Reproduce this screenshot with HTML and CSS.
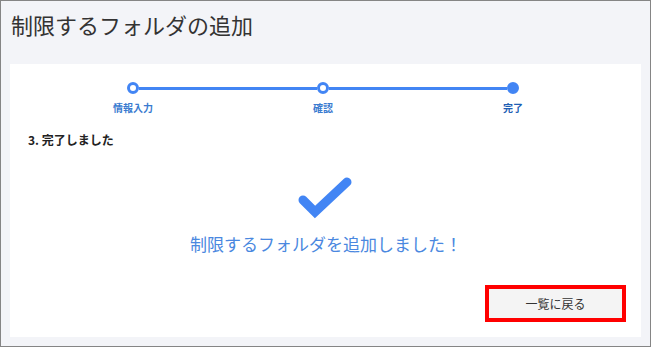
FILE: index.html
```html
<!DOCTYPE html>
<html lang="ja">
<head>
    <meta charset="UTF-8">
    <title>制限するフォルダの追加</title>
    <meta name="viewport" content="width=device-width, initial-scale=1.0">
    <link rel="stylesheet" href="styles.css">
</head>
<body>
    <div class="window">
        <div class="header">
            <h1>制限するフォルダの追加</h1>
        </div>

        <div class="panel">
            <div class="stepper">
                <div class="step first done">
                    <div class="dot-row">
                        <span class="line"></span>
                        <span class="dot"></span>
                        <span class="line"></span>
                    </div>
                    <div class="label">情報入力</div>
                </div>
                <div class="step done">
                    <div class="dot-row">
                        <span class="line"></span>
                        <span class="dot"></span>
                        <span class="line"></span>
                    </div>
                    <div class="label">確認</div>
                </div>
                <div class="step last current">
                    <div class="dot-row">
                        <span class="line"></span>
                        <span class="dot"></span>
                        <span class="line"></span>
                    </div>
                    <div class="label">完了</div>
                </div>
            </div>

            <h3 class="section-title">3. 完了しました</h3>

            <div class="result">
                <svg class="check" width="60" height="46" viewBox="0 0 60 46">
                    <polyline points="7,25 19,37 51,7" fill="none" stroke="#4285f4" stroke-width="9" stroke-linecap="round" stroke-linejoin="miter"/>
                </svg>
                <p class="message">制限するフォルダを追加しました！</p>
            </div>

            <div class="actions">
                <button type="button" class="btn-back">一覧に戻る</button>
            </div>
        </div>
    </div>
</body>
</html>
```

FILE: styles.css
```css
* {
    box-sizing: border-box;
}

body {
    margin: 0;
    padding: 0;
    font-family: "Noto Sans CJK JP", "Noto Sans", sans-serif;
    color: #333;
}

.window {
    width: 651px;
    height: 347px;
    border: 1px solid #858585;
    background-color: #f3f4f8;
}

.header {
    padding: 8px 10px 0;
}

.header h1 {
    margin: 0;
    font-size: 22px;
    font-weight: normal;
    line-height: 30px;
    color: #333;
}

.panel {
    margin: 25px 9px 0;
    height: 273px;
    background: #fff;
    padding: 18px 15px 0 18px;
}

.stepper {
    display: grid;
    grid-template-columns: repeat(3, 190px);
    margin-left: 10px;
}

.dot-row {
    display: flex;
    align-items: center;
    height: 12px;
}

.line {
    flex: 1;
    height: 3px;
    background-color: #4285f4;
}

.first .line:first-child,
.last .line:last-child {
    background: transparent;
}

.dot {
    width: 12px;
    height: 12px;
    border-radius: 50%;
    border: 3px solid #4285f4;
    background: #fff;
}

.current .dot {
    background: #4285f4;
}

.label {
    margin-top: 7px;
    text-align: center;
    font-size: 10px;
    line-height: 14px;
    font-weight: bold;
    color: #3a7bd0;
}

.current .label {
    color: #1f5fb4;
}

.section-title {
    margin: 16px 0 0;
    font-size: 12px;
    line-height: 18px;
    font-weight: bold;
    color: #222;
}

.result {
    display: flex;
    flex-direction: column;
    align-items: center;
    margin-top: 26px;
    padding-right: 2px;
}

.check {
    display: block;
}

.message {
    margin: 12px 0 0;
    font-size: 17px;
    line-height: 22px;
    color: #4a88e0;
}

.actions {
    display: flex;
    justify-content: flex-end;
    margin-top: 30px;
}

.btn-back {
    width: 141px;
    height: 37px;
    border: 4px solid #ff0000;
    background: #f4f4f4;
    font-family: inherit;
    font-size: 12px;
    color: #333;
    cursor: pointer;
}
```
